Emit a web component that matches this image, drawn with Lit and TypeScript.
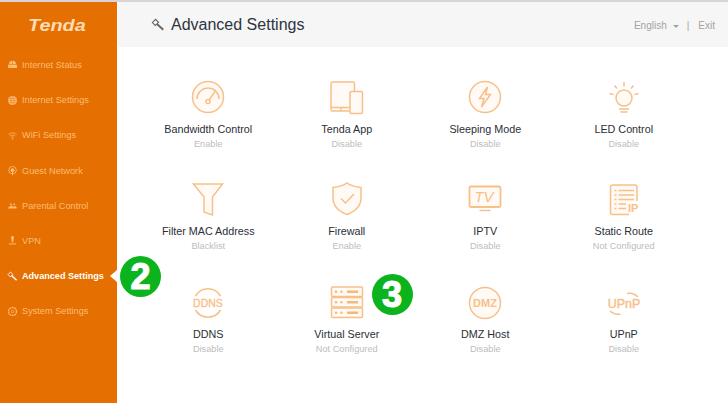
import { LitElement, html, css, svg } from "lit";
import { customElement } from "lit/decorators.js";

const toolShape = svg`<path d="M1.500 5.200L5.200 1.500L8.600 4.900L4.900 8.600Z" fill="none" stroke="currentColor" stroke-width="1.300"/><path d="M6.800 6.800L14 13.500" fill="none" stroke="currentColor" stroke-width="2.200"/>`;

const navIcons: Record<string, unknown> = {
  status: svg`<path d="M3 7.500 A5 5 0 0 1 13 7.500 Z M1.500 8.500 H14.500 V13 H1.500 Z" fill="currentColor"/><path d="M8 2V8.500" stroke="#e56f00" stroke-width=".8"/><circle cx="4" cy="10.800" r=".7" fill="#e56f00"/>`,
  globe: svg`<circle cx="8" cy="8" r="6.500" fill="currentColor"/><path d="M2 8H14M3 5H13M3 11H13M8 2C5 5 5 11 8 14C11 11 11 5 8 2" fill="none" stroke="#e56f00" stroke-width=".6"/>`,
  wifi: svg`<path d="M2 6.500C5.500 3.500 10.500 3.500 14 6.500M4 8.800C6.500 6.800 9.500 6.800 12 8.800M6 11C7.200 10 8.800 10 10 11" fill="none" stroke="currentColor" stroke-width="1.100"/><circle cx="8" cy="13" r="1" fill="currentColor"/>`,
  guest: svg`<circle cx="8" cy="7.500" r="5.500" fill="none" stroke="currentColor" stroke-width="1.200"/><circle cx="8" cy="7.500" r="2.800" fill="currentColor"/><path d="M8 10V15" stroke="currentColor" stroke-width="1.400"/>`,
  parental: svg`<path d="M2 12.500H14V10.500L11.500 8.500L9.500 10L7 7.500L4.500 9L2 10.500Z" fill="currentColor"/><circle cx="5.500" cy="6" r="1.300" fill="currentColor"/><circle cx="10.500" cy="6" r="1.300" fill="currentColor"/>`,
  vpn: svg`<path d="M5.800 3.500A2.200 2.200 0 0 1 10.200 3.500L9.200 8.500V10.500H6.800V8.500Z" fill="currentColor"/><path d="M3 13H13" stroke="currentColor" stroke-width="1.400"/>`,
  tools: toolShape,
  gear: svg`<circle cx="8" cy="8" r="5.800" fill="none" stroke="currentColor" stroke-width="1.800" stroke-dasharray="3 .6"/><circle cx="8" cy="8" r="1.800" fill="none" stroke="currentColor" stroke-width="1.100"/>`,
};

const nav = [
  ["Internet Status", "status"],
  ["Internet Settings", "globe"],
  ["WiFi Settings", "wifi"],
  ["Guest Network", "guest"],
  ["Parental Control", "parental"],
  ["VPN", "vpn"],
  ["Advanced Settings", "tools"],
  ["System Settings", "gear"],
];

/* Each feature icon is drawn in a 36x36 box whose centre is the icon's centre. */
const features: [string, string, unknown][] = [
  ["Bandwidth Control", "Enable", svg`<circle cx="18" cy="18" r="15.500" class="f"/><path d="M7 20A11 11 0 0 1 29 20"/><circle cx="18" cy="22.500" r="2"/><path d="M19.200 21L26 11"/>`],
  ["Tenda App", "Disable", svg`<path class="f" d="M26 32H3.500A1.500 1.500 0 0 1 2 30.500V4.500A1.500 1.500 0 0 1 3.500 3H24A1.500 1.500 0 0 1 25.500 4.500V12"/><path d="M2 28.500H21M12 28.500V32"/><rect class="f" x="21" y="12.500" width="12.500" height="22" rx="1.500"/>`],
  ["Sleeping Mode", "Disable", svg`<circle cx="18" cy="18" r="15.500" class="f"/><path d="M20.500 8L12.500 19.500H17L14.500 28L23.500 15.500H18.500Z"/>`],
  ["LED Control", "Disable", svg`<circle cx="18" cy="19" r="8" class="f"/><path d="M18 3V7.500M8.500 6.500L11 9.500M27.500 6.500L25 9.500M3.500 14.500L7.500 15.500M32.500 14.500L28.500 15.500M13 30H23M14.500 33H21.500"/>`],
  ["Filter MAC Address", "Blacklist", svg`<path class="f" d="M3.500 3H32.500L22.500 16V34L14 31V16Z"/>`],
  ["Firewall", "Enable", svg`<path class="f" d="M18 2C22 5 26.500 6 32 6.500V17C32 25 26 30.500 18 33.500C10 30.500 4 25 4 17V6.500C9.500 6 14 5 18 2Z"/><path d="M12 17.500L16.500 22L25 13"/>`],
  ["IPTV", "Disable", svg`<rect class="f" x="2.500" y="5.500" width="31" height="20.500" rx="1.500" style="stroke-width:1.800"/><path d="M12.500 29.500H23.500"/><text x="17" y="21" class="ttv">TV</text>`],
  ["Static Route", "Not Configured", svg`<path class="f" d="M31 20V6A2 2 0 0 0 29 4H6.500A2 2 0 0 0 4.500 6V31.500A2 2 0 0 0 6.500 33.500H23"/><path d="M8.500 9.500H10.500M12.500 9.500H28M8.500 14H10.500M12.500 14H28M8.500 18.500H10.500M12.500 18.500H28M8.500 23H10.500M12.500 23H20M8.500 27.500H10.500M12.500 27.500H20"/><text x="22" y="30.500" class="tip">IP</text>`],
  ["DDNS", "Disable", svg`<path d="M5.500 12A14.500 14.500 0 0 1 30.500 12M30.500 26A14.500 14.500 0 0 1 5.500 26"/><text x="18" y="23" class="tdd">DDNS</text>`],
  ["Virtual Server", "Not Configured", svg`<rect class="f" x="2.500" y="3" width="31" height="9.500" rx="1"/><rect class="f" x="2.500" y="13.500" width="31" height="9.500" rx="1"/><rect class="f" x="2.500" y="24" width="31" height="9.500" rx="1"/><g class="d"><circle cx="7" cy="7.800" r="1.200"/><circle cx="12.500" cy="7.800" r="1.200"/><rect x="18" y="6.500" width="11" height="2.500"/><circle cx="7" cy="18.300" r="1.200"/><circle cx="12.500" cy="18.300" r="1.200"/><rect x="18" y="17" width="11" height="2.500"/><circle cx="7" cy="28.800" r="1.200"/><circle cx="12.500" cy="28.800" r="1.200"/><rect x="18" y="27.500" width="11" height="2.500"/></g>`],
  ["DMZ Host", "Disable", svg`<circle cx="18" cy="19" r="15.500" class="f"/><text x="18" y="23" class="tdm">DMZ</text>`],
  ["UPnP", "Disable", svg`<text x="18" y="24" class="tup">UPnP</text><path d="M21 9.500A12 12 0 0 1 32 13M4 27A12 12 0 0 0 14.500 30"/>`],
];

@customElement("app-root")
export class AppRoot extends LitElement {
  static styles = css`
    :host {
      display: block;
      width: 728px;
      height: 403px;
      overflow: hidden;
      font-family: "Liberation Sans", Arial, sans-serif;
      background: #fff;
    }
    .page {
      display: flex;
      height: 403px;
      box-sizing: border-box;
      border-top: 2px solid #d6d6d6;
    }
    .side {
      flex: 0 0 117px;
      background: #e56f00;
      box-sizing: border-box;
      display: flex;
      flex-direction: column;
    }
    .logo {
      height: 45.400px;
      box-sizing: border-box;
      padding: 15px 0 0 28px;
      color: #fcdcb6;
      font-size: 16px;
      line-height: 18px;
      font-weight: 700;
      font-style: italic;
    }
    .logo span {
      display: inline-block;
      transform: scaleX(1.240);
      transform-origin: left center;
    }
    .item {
      position: relative;
      height: 35.200px;
      display: flex;
      align-items: center;
      gap: 4px;
      padding-left: 7px;
      font-size: 9.200px;
      color: #fdbc74;
      white-space: nowrap;
    }
    .item svg { width: 11px; height: 11px; flex: none; }
    .item.on { color: #fff; font-weight: 700; font-size: 9.100px; }
    .item.on::after {
      content: "";
      position: absolute;
      right: 0;
      top: 11.500px;
      border: 6px solid transparent;
      border-left-width: 0;
      border-right: 7px solid #fff;
    }
    .badge {
      position: absolute;
      width: 41px;
      height: 41px;
      border-radius: 50%;
      background: #0bb41c;
      color: #fff;
      font-size: 36px;
      font-weight: 700;
      line-height: 41px;
      text-align: center;
      -webkit-text-stroke: 1.200px #fff;
    }
    .item .badge { left: 120px; top: -3px; }
    .main { flex: 1; display: flex; flex-direction: column; padding-left: 1px; }
    .head {
      height: 45px;
      background: #f6f6f6;
      display: flex;
      align-items: center;
      padding: 0 13px 0 33px;
    }
    .head svg { width: 14px; height: 14px; color: #666; margin-right: 6px; flex: none; }
    .title { font-size: 16px; color: #2e3440; flex: 1; }
    .tools { font-size: 10px; color: #a3a3a3; display: flex; align-items: center; padding-top: 2px; }
    .caret {
      border: 3.500px solid transparent;
      border-top: 3.500px solid #a3a3a3;
      border-bottom-width: 0;
      margin: 1px 8px 0 6px;
      width: 0;
    }
    .sep { margin-right: 9px; }
    .grid {
      display: grid;
      grid-template-columns: repeat(4, 138.500px);
      grid-template-rows: 102px 103px 100px;
      padding: 32px 0 0 21px;
    }
    .cell {
      position: relative;
      display: flex;
      flex-direction: column;
      align-items: center;
      text-align: center;
    }
    .cell > svg { width: 36px; height: 36px; flex: none; overflow: visible; }
    .cell > svg * {
      fill: none;
      stroke: #f8c088;
      stroke-width: 1.500;
    }
    .cell > svg .f { fill: #fffaf5; }
    .cell > svg .d, .cell > svg .d * { fill: #f5b877; stroke: none; }
    .cell > svg text { fill: #f8c088; stroke: none; font-family: "Liberation Sans", Arial, sans-serif; }
    .cell > svg .ttv { font-size: 15px; font-style: italic; text-anchor: middle; }
    .cell > svg .tip { font-size: 11px; font-weight: 700; }
    .cell > svg .tdd { font-size: 10.500px; text-anchor: middle; stroke: #f8c088; stroke-width: .3; }
    .cell > svg .tdm { font-size: 11px; font-weight: 700; text-anchor: middle; }
    .cell > svg .tup { font-size: 12.500px; text-anchor: middle; stroke: #f8c088; stroke-width: .4; }
    .label { margin-top: 7px; font-size: 10.750px; line-height: 14px; color: #2b2f36; white-space: nowrap; }
    .sub { margin-top: 2px; font-size: 9.200px; line-height: 13px; color: #bdbdbd; white-space: nowrap; }
    .cell .badge { left: 94px; top: -10px; }
  `;

  render() {
    return html`<div class="page">
      <aside class="side">
        <div class="logo"><span>Tenda</span></div>
        ${nav.map(([name, icon]) => {
          const on = icon === "tools";
          return html`<div class="item ${on ? "on" : ""}">
            <svg viewBox="0 0 16 16">${navIcons[icon]}</svg>${name}
            ${on ? html`<div class="badge">2</div>` : ""}
          </div>`;
        })}
      </aside>
      <main class="main">
        <header class="head">
          <svg viewBox="0 0 16 16">${navIcons.tools}</svg>
          <div class="title">Advanced Settings</div>
          <div class="tools">English<span class="caret"></span><span class="sep">|</span>Exit</div>
        </header>
        <section class="grid">
          ${features.map(
            ([name, sub, icon]) => html`<div class="cell">
              <svg viewBox="0 0 36 36">${icon}</svg>
              <div class="label">${name}</div>
              <div class="sub">${sub}</div>
              ${name === "Virtual Server" ? html`<div class="badge">3</div>` : ""}
            </div>`
          )}
        </section>
      </main>
    </div>`;
  }
}
